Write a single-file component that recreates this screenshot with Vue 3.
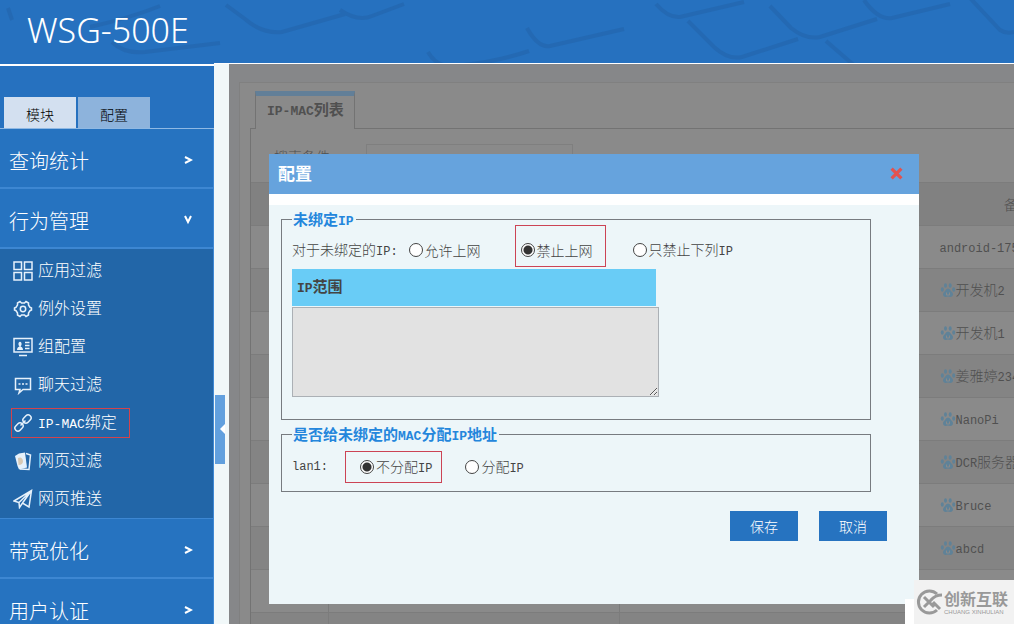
<template>
  <div class="page">
    <header class="banner">
      <svg class="banner-pattern" viewBox="0 0 1014 63" preserveAspectRatio="xMinYMin slice" aria-hidden="true">
        <path d="M8 8 L12 20 M90 27 Q130 18 160 6" />
        <path d="M112 42 Q124 54 145 52 L220 43" />
        <path d="M226 5 L245 19 Q262 34 282 32 L345 14" />
        <path d="M340 10 Q358 22 372 16 L404 4" />
        <path d="M428 52 Q436 66 450 66 Q490 64 529 51" />
        <path d="M527 28 Q538 48 550 46 L624 29" />
        <path d="M656 4 Q668 18 680 17 L744 2" />
        <path d="M688 21 L714 47 Q728 60 742 57 L798 39" />
        <path d="M770 6 L791 28 Q806 40 820 37 L877 19" />
        <path d="M826 41 L856 67" />
        <path d="M864 0 Q878 20 892 18 L950 4" />
        <path d="M970 -2 L1000 30 Q1006 34 1014 32" />
      </svg>
      <h1 class="brand">WSG-500E</h1>
    </header>

    <div class="body">
      <nav class="sidebar">
        <div class="side-tabs">
          <button
            v-for="tab in sideTabs"
            :key="tab"
            type="button"
            :class="['side-tab', { active: currentTab === tab }]"
            @click="currentTab = tab"
          >{{ tab }}</button>
        </div>

        <div v-for="group in menu" :key="group.title" class="group">
          <button type="button" class="group-title" @click="toggle(group.title)">
            <span>{{ group.title }}</span>
            <svg class="chevron" viewBox="0 0 10 10" aria-hidden="true">
              <path :d="opened === group.title ? 'M2 1 L5 7 L8 1' : 'M2 2 L8 5 L2 8'" />
            </svg>
          </button>

          <ul v-if="opened === group.title && group.items.length" class="submenu">
            <li v-for="item in group.items" :key="item.text">
              <a href="#" :class="['sub-link', { marked: item.marked }]" @click.prevent>
                <svg class="sub-icon" viewBox="0 0 20 20" aria-hidden="true">
                  <g v-if="item.icon === 'grid'">
                    <rect x="1" y="1" width="7.500" height="7.500" />
                    <rect x="11.500" y="1" width="7.500" height="7.500" />
                    <rect x="1" y="11.500" width="7.500" height="7.500" />
                    <rect x="11.500" y="11.500" width="7.500" height="7.500" />
                  </g>
                  <g v-else-if="item.icon === 'gear'">
                    <path d="M7 2.500 L8.500 4 H11.500 L13 2.500 L15.500 4 L15.500 6 L17 8.300 L18.500 9 V11 L17 11.700 L15.500 14 V16 L13 17.500 L11.500 16 H8.500 L7 17.500 L4.500 16 V14 L3 11.700 L1.500 11 V9 L3 8.300 L4.500 6 V4 Z" />
                    <circle cx="10" cy="10" r="2.700" />
                  </g>
                  <g v-else-if="item.icon === 'card'">
                    <rect x="1" y="1.500" width="18" height="13.500" />
                    <path class="solid" d="M4 13 Q4 10 6.500 9.500 Q5 8 5.500 6 Q7 3.500 8.500 6 Q9 8 7.500 9.500 Q10 10 10 13 Z" />
                    <path d="M12 5.500 H16.500 M12 8.500 H16.500 M12 11.500 H16.500 M6 18.500 H14" />
                  </g>
                  <g v-else-if="item.icon === 'chat'">
                    <path d="M2.500 3.500 H17.500 V14.500 H10 L6 18 L7 14.500 H2.500 Z" />
                    <path d="M5.500 9 H7.500 M9 9 H11 M12.500 9 H14.500" />
                  </g>
                  <g v-else-if="item.icon === 'link'">
                    <rect x="-4.500" y="-3" width="9" height="6" rx="3" transform="translate(6 14) rotate(-45)" />
                    <rect x="-4.500" y="-3" width="9" height="6" rx="3" transform="translate(14 6) rotate(-45)" />
                    <path d="M7.500 12.500 L12.500 7.500" />
                  </g>
                  <g v-else-if="item.icon === 'pages'">
                    <path d="M13 2.500 L17.500 4 L16 18.500 L7 18" />
                    <path class="solid" d="M2 5 L6 2.500 L12 1.500 L14 16.500 L6 18.500 L4.500 15 Z" />
                    <path class="shade" d="M5 7 Q9 5 10 10 Q10 14 5.500 14 Z" />
                  </g>
                  <g v-else>
                    <path d="M1 12 L18.500 1.500 L16 18 L9.500 14 L6.500 18.500 L6 13.500 Z M6 13.500 L18.500 1.500 L9.500 14" />
                  </g>
                </svg>
                <span><span class="en">{{ item.en }}</span>{{ item.text }}</span>
              </a>
            </li>
          </ul>
        </div>
      </nav>

      <div class="splitter">
        <button type="button" class="collapse" aria-label="收起"></button>
      </div>

      <main class="content">
        <section class="panel">
          <h2 class="panel-tab"><span class="en">IP-MAC</span>列表</h2>
          <div class="list">
            <div class="search">
              <label for="search">搜索条件</label>
              <input id="search" v-model="keyword" type="text" />
            </div>
            <table class="hosts">
              <colgroup>
                <col class="col-check" />
                <col class="col-ip" />
                <col class="col-mac" />
                <col class="col-note" />
              </colgroup>
              <thead>
                <tr><th></th><th></th><th></th><th>备注</th></tr>
              </thead>
              <tbody>
                <tr v-for="(host, i) in hosts" :key="i">
                  <td></td>
                  <td></td>
                  <td></td>
                  <td>
                    <div class="note">
                      <svg v-if="host.paw" class="paw" viewBox="0 0 16 16" aria-hidden="true">
                        <ellipse cx="2.300" cy="7.500" rx="1.500" ry="2.200" />
                        <ellipse cx="5.500" cy="3.500" rx="1.500" ry="2.300" />
                        <ellipse cx="10.200" cy="3.500" rx="1.500" ry="2.300" />
                        <ellipse cx="13.700" cy="7.500" rx="1.500" ry="2.200" />
                        <path d="M8 6.500 Q10 6.500 11 9 Q14 11.500 12.500 14 Q11 15.500 8 14.500 Q5 15.500 3.500 14 Q2 11.500 5 9 Q6 6.500 8 6.500 Z" />
                        <path class="paw-cut" d="M6.500 10.500 V13 H9.500 V10.500" />
                      </svg>
                      <span>{{ host.cn }}<span class="en">{{ host.en }}</span>{{ host.tail }}</span>
                    </div>
                  </td>
                </tr>
              </tbody>
            </table>
          </div>
        </section>

        <form class="dialog" role="dialog" aria-labelledby="dialog-title" @submit.prevent>
          <div class="dialog-head">
            <h2 id="dialog-title">配置</h2>
            <button type="button" class="close" aria-label="关闭">
              <svg viewBox="0 0 12 12" aria-hidden="true"><path d="M1.500 1.500 L10.500 10.500 M10.500 1.500 L1.500 10.500" /></svg>
            </button>
          </div>
          <div class="dialog-body">
            <fieldset class="unbound">
              <legend>未绑定<span class="en">IP</span></legend>
              <div class="choices">
                <span class="lead">对于未绑定的<span class="en">IP:</span></span>
                <label class="choice">
                  <input v-model="policy" type="radio" name="policy" value="allow" />
                  <span>允许上网</span>
                </label>
                <label class="choice marked">
                  <input v-model="policy" type="radio" name="policy" value="deny" />
                  <span>禁止上网</span>
                </label>
                <label class="choice">
                  <input v-model="policy" type="radio" name="policy" value="listed" />
                  <span>只禁止下列<span class="en">IP</span></span>
                </label>
              </div>
              <label for="range" class="range-label">
                <span><span class="en">IP</span>范围</span>
              </label>
              <textarea id="range" v-model="range" class="range"></textarea>
            </fieldset>

            <fieldset class="assign">
              <legend>是否给未绑定的<span class="en">MAC</span>分配<span class="en">IP</span>地址</legend>
              <div class="choices">
                <span class="lead en">lan1:</span>
                <label class="choice marked">
                  <input v-model="assign" type="radio" name="assign" value="no" />
                  <span>不分配<span class="en">IP</span></span>
                </label>
                <label class="choice">
                  <input v-model="assign" type="radio" name="assign" value="yes" />
                  <span>分配<span class="en">IP</span></span>
                </label>
              </div>
            </fieldset>

            <div class="actions">
              <button type="submit">保存</button>
              <button type="button">取消</button>
            </div>
          </div>
        </form>
      </main>
    </div>

    <div class="watermark">
      <svg viewBox="0 0 28 26" aria-hidden="true">
        <path d="M21 5 A11 11 0 1 0 21 21" />
        <path d="M8 8 L18 18 M8 18 L15 11 Q19 6 26 6 M17 13 L24 20" />
      </svg>
      <div>
        <strong>创新互联</strong>
        <small>CHUANG XINHULIAN</small>
      </div>
    </div>
  </div>
</template>

<script setup>
import { ref } from 'vue'

const sideTabs = ['模块', '配置']
const currentTab = ref('模块')

const menu = [
  { title: '查询统计', items: [] },
  {
    title: '行为管理',
    items: [
      { icon: 'grid', text: '应用过滤' },
      { icon: 'gear', text: '例外设置' },
      { icon: 'card', text: '组配置' },
      { icon: 'chat', text: '聊天过滤' },
      { icon: 'link', en: 'IP-MAC', text: '绑定', marked: true },
      { icon: 'pages', text: '网页过滤' },
      { icon: 'plane', text: '网页推送' }
    ]
  },
  { title: '带宽优化', items: [] },
  { title: '用户认证', items: [] }
]
const opened = ref('行为管理')

const toggle = (title) => {
  opened.value = opened.value === title ? '' : title
}

const hosts = [
  { en: 'android-175' },
  { cn: '开发机', en: '2', paw: true },
  { cn: '开发机', en: '1', paw: true },
  { cn: '姜雅婷', en: '234', paw: true },
  { en: 'NanoPi', paw: true },
  { en: 'DCR', tail: '服务器', paw: true },
  { en: 'Bruce', paw: true },
  { en: 'abcd', paw: true },
  {},
  {}
]

const keyword = ref('')
const policy = ref('deny')
const range = ref('')
const assign = ref('no')
</script>

<style>
body {
  margin: 0;
}
</style>

<style scoped>
.page {
  position: relative;
  display: flex;
  flex-direction: column;
  height: 100vh;
  overflow: hidden;
  background: #2671bf;
  color: #444;
  font-family: "Noto Sans CJK SC", sans-serif;
  font-size: 14px;
  font-weight: 300;
  line-height: 20px;
}

.page * {
  box-sizing: border-box;
}

button,
input,
textarea {
  font: inherit;
}

button {
  padding: 0;
  border: none;
  cursor: pointer;
}

h1,
h2,
ul {
  margin: 0;
  padding: 0;
}

.en {
  font-family: "Liberation Mono", monospace;
  font-size: 12px;
}

/* Banner */
.banner {
  position: relative;
  flex: none;
  height: 63px;
  overflow: hidden;
}

.banner-pattern {
  position: absolute;
  inset: 0;
  width: 100%;
  height: 100%;
  fill: none;
  stroke: #2467ae;
  stroke-width: 4;
  opacity: 0.7;
}

.brand {
  position: relative;
  padding-left: 27px;
  color: #fff;
  font-family: "Noto Sans", sans-serif;
  font-size: 34px;
  font-weight: 300;
  line-height: 60px;
}

.body {
  display: flex;
  flex: 1;
  min-height: 0;
}

/* Sidebar */
.sidebar {
  flex: none;
  width: 214px;
  padding-top: 1px;
  overflow: hidden;
}

.side-tabs {
  display: flex;
  gap: 2px;
  padding: 31px 4px 0;
  border-top: 2px solid #fff;
  border-bottom: 1px solid #8fb9e4;
}

.side-tab {
  width: 72px;
  height: 31px;
  padding-top: 2px;
  background: #8db3dc;
  color: #000;
}

.side-tab.active {
  background: #d3e0f0;
}

.group {
  border-right: 1px solid #4089d4;
}

.group-title {
  display: flex;
  align-items: center;
  justify-content: space-between;
  width: 100%;
  height: 60px;
  padding: 6px 20px 0 9px;
  border-bottom: 2px solid #3d87d2;
  background: #2673c0;
  color: #fff;
  font-size: 20px;
}

.chevron {
  width: 10px;
  height: 10px;
  margin-bottom: 2px;
  fill: none;
  stroke: #fff;
  stroke-width: 2;
}

.submenu {
  padding-top: 3px;
  border-bottom: 1px solid #3d87d2;
  background: #2266a8;
  list-style: none;
}

.submenu li {
  display: flex;
  align-items: center;
  height: 38px;
  padding-left: 11px;
}

.sub-link {
  display: flex;
  align-items: center;
  gap: 5px;
  height: 30px;
  padding: 0 12px 0 1px;
  border: 1px solid transparent;
  color: #fff;
  font-size: 16px;
  text-decoration: none;
}

.sub-link .en {
  font-size: 13px;
}

.sub-link.marked {
  border-color: #d4434c;
}

.sub-icon {
  width: 20px;
  height: 20px;
  fill: none;
  stroke: #e6f1fb;
  stroke-width: 1.5;
}

.sub-icon .solid {
  fill: #e6f1fb;
  stroke: none;
}

.sub-icon .shade {
  fill: #d8c9b4;
  stroke: none;
}

.splitter {
  display: flex;
  flex: none;
  align-items: center;
  width: 15px;
  border-top: 1px solid #fff;
  background: #f1f8f9;
}

.collapse {
  display: flex;
  align-items: center;
  justify-content: flex-end;
  width: 10px;
  height: 69px;
  margin: 170px 0 0 1px;
  background: #62a0de;
}

.collapse::before {
  content: "";
  border: 5px solid transparent;
  border-right-color: #fff;
  border-left: none;
}

/* List behind the dialog */
.content {
  position: relative;
  flex: 1;
  min-width: 0;
  padding: 18px 0 0 10px;
  overflow: hidden;
  border-top: 1px solid #fff;
  background: #868789;
}

.panel {
  padding: 8px 0 0 10px;
  border-top: 1px solid #808080;
  border-left: 1px solid #808080;
  background: #8a8a8a;
  color: #505050;
}

.panel-tab {
  position: relative;
  width: 100px;
  height: 38px;
  margin: 0 0 -1px 5px;
  padding: 3px 0 0 11px;
  border: 1px solid #737373;
  border-top: 5px solid #627f98;
  border-bottom: none;
  background: #8a8a8a;
  font-size: 15px;
  font-weight: 700;
}

.panel-tab .en {
  font-size: 13px;
}

.list {
  border-top: 1px solid #737373;
  border-left: 1px solid #737373;
}

.search {
  display: flex;
  align-items: center;
  gap: 36px;
  height: 53px;
  padding-left: 23px;
}

.search input {
  width: 207px;
  height: 24px;
  border: 1px solid #7f7f7f;
  background: transparent;
}

.hosts {
  width: 876px;
  table-layout: fixed;
  border-collapse: collapse;
}

.col-check {
  width: 77px;
}

.col-ip {
  width: 291px;
}

.col-mac {
  width: 290px;
}

.hosts th,
.hosts td {
  height: 43px;
  padding: 0;
  border: 1px solid #7c7c7c;
  border-left: none;
}

.hosts th {
  background: #818181;
  font-weight: 300;
}

.hosts tr:nth-child(even) td {
  background: #848484;
}

.note {
  display: flex;
  align-items: center;
  padding-left: 30px;
  white-space: nowrap;
}

.paw {
  width: 16px;
  height: 16px;
  fill: #5f8298;
}

.paw-cut {
  fill: none;
  stroke: #8a8a8a;
}

/* Dialog */
.dialog {
  position: absolute;
  top: 90px;
  left: 40px;
  width: 650px;
  background: #edf6f9;
}

.dialog-head {
  display: flex;
  align-items: center;
  justify-content: space-between;
  height: 51px;
  padding: 0 16px 2px 9px;
  border-bottom: 11px solid #fff;
  background: #66a3dd;
}

.dialog-head h2 {
  color: #fff;
  font-size: 17px;
  font-weight: 700;
}

.close {
  display: flex;
  background: none;
}

.close svg {
  width: 13px;
  height: 13px;
  fill: none;
  stroke: #e2524f;
  stroke-width: 3;
}

.dialog-body {
  display: flex;
  flex-direction: column;
  gap: 8px;
  padding: 8px 32px 63px 12px;
}

fieldset {
  min-width: 0;
  margin: 0 16px 0 0;
  border: 1px solid #777b80;
}

.unbound {
  padding: 0 10px 22px;
}

.assign {
  padding: 11px 10px 8px;
}

legend {
  height: 12px;
  padding: 0 2px 0 1px;
  color: #2486dc;
  font-size: 15px;
  font-weight: 700;
  line-height: 12px;
}

legend .en {
  font-size: 13px;
}

.choices {
  display: flex;
  align-items: center;
}

.lead {
  margin-right: 11px;
}

.choice {
  display: flex;
  align-items: center;
}

.choice input {
  width: 14px;
  height: 14px;
  margin: 0 2px 0 0;
  border: 1px solid #444;
  border-radius: 50%;
  appearance: none;
  background: #fff;
}

.choice input:checked {
  background: radial-gradient(circle, #333 0 4px, #fff 5px);
}

.choice.marked {
  border: 1px solid #cc4455;
}

.unbound .lead,
.unbound .choice {
  padding-top: 8px;
}

.unbound .marked {
  height: 42px;
  margin: 0 27px 0 34px;
  padding: 8px 12px 0 5px;
}

.assign .lead {
  margin-right: 17px;
}

.assign .marked {
  height: 32px;
  margin-right: 23px;
  padding: 0 9px 0 14px;
}

.range-label {
  display: flex;
  align-items: center;
  width: 364px;
  height: 37px;
  margin-top: 2px;
  padding-left: 5px;
  background: #69ccf6;
  font-size: 15px;
  font-weight: 700;
}

.range-label .en {
  font-size: 13px;
}

.range {
  display: block;
  width: 367px;
  height: 90px;
  margin-top: 1px;
  border: 1px solid #abb0b5;
  background: #e2e2e2;
}

.actions {
  display: flex;
  justify-content: flex-end;
  gap: 21px;
  margin-top: 11px;
}

.actions button {
  width: 68px;
  height: 30px;
  background: #2673c0;
  color: #fff;
}

.watermark {
  position: absolute;
  right: 0;
  bottom: 0;
  display: flex;
  align-items: center;
  width: 100px;
  height: 44px;
  padding-left: 2px;
  background: #f2f2f2;
  color: #999;
}

.watermark::before {
  content: "";
  position: absolute;
  right: 100%;
  bottom: 0;
  width: 9px;
  height: 25px;
  background: #fff;
}

.watermark svg {
  width: 28px;
  height: 26px;
  fill: none;
  stroke: #999;
  stroke-width: 3;
}

.watermark strong,
.watermark small {
  display: block;
  white-space: nowrap;
}

.watermark strong {
  font-size: 16px;
  font-weight: 700;
  line-height: 20px;
}

.watermark small {
  font-family: "Liberation Sans", sans-serif;
  font-size: 6px;
  line-height: 8px;
}
</style>
